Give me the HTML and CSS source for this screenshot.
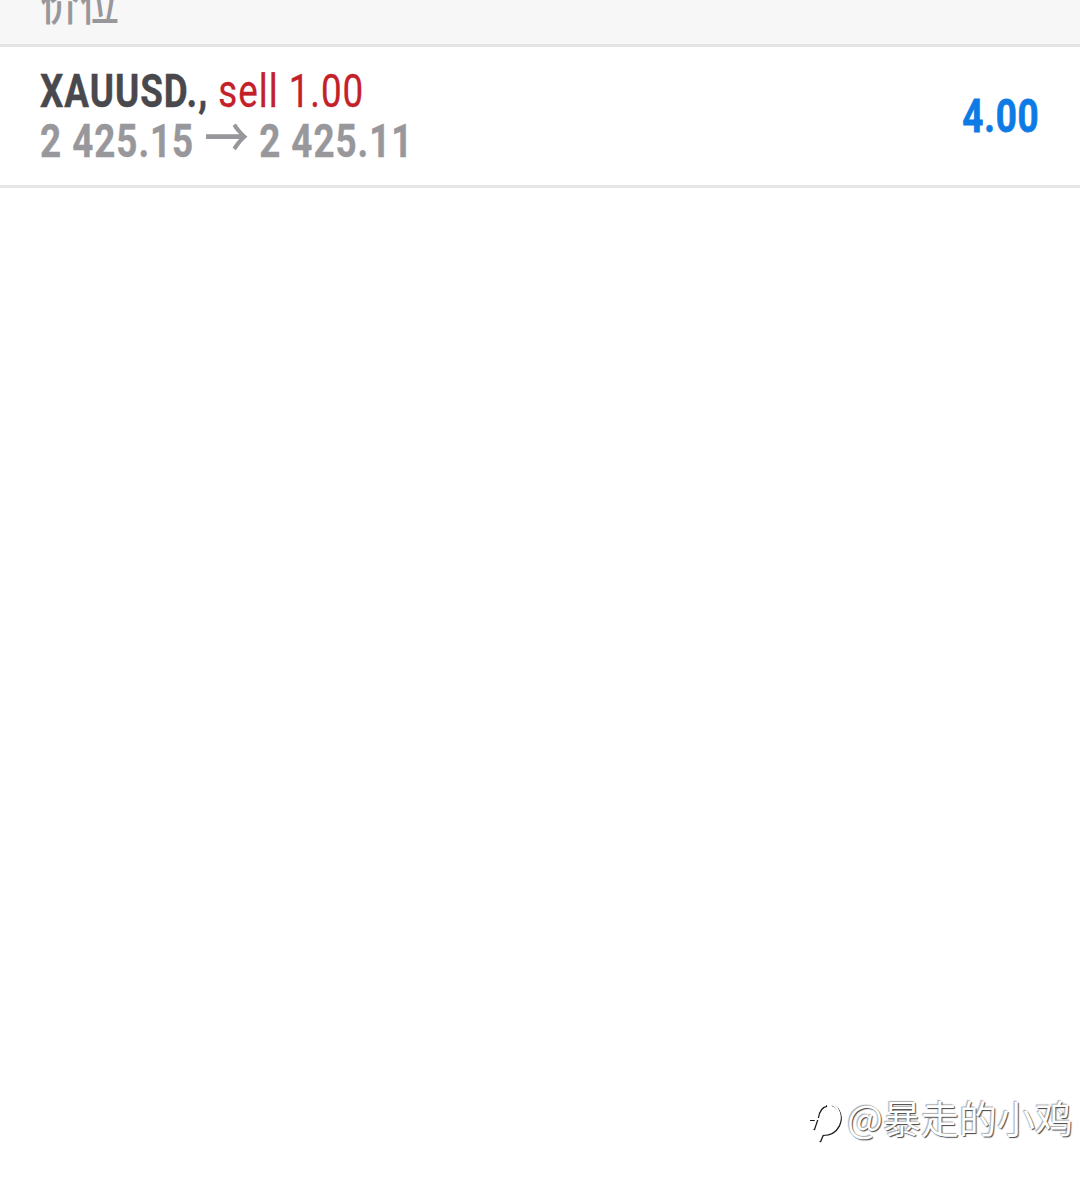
FILE: index.html
```html
<!DOCTYPE html>
<html lang="zh">
<head>
<meta charset="utf-8">
<title>价位</title>
<link rel="stylesheet" href="styles.css">
</head>
<body>
<div class="page">
  <header class="head"><span class="head-text">价位</span></header>
  <div class="row">
    <div class="info">
      <div class="line1"><b class="sym">XAUUSD.,</b> <span class="side">sell 1.00</span></div>
      <div class="line2">2 425.15 <span class="arrow">→</span> 2 425.11</div>
    </div>
    <div class="profit">4.00</div>
  </div>
  <div class="mark">
    <svg class="mark-icon" viewBox="0 0 34 44" width="34" height="44" aria-hidden="true">
      <path class="s-dark" d="M22 5C30 8 33 18 29 26C26 32 20 35 13 35L10 42"/>
      <path class="s-dark" d="M17 6C11 7 9 12 8 18L4 30"/>
      <path class="s-dark" d="M0 20H6M14 19H17"/>
      <path class="s-light" d="M21 4C29 7 32 17 28 25C25 31 19 34 12 34L9 41"/>
      <path class="s-light" d="M16 5C10 6 8 11 7 17L3 29M0 19H17"/>
    </svg>
    <span class="mark-text">@暴走的小鸡</span>
  </div>
</div>
</body>
</html>
```
FILE: styles.css
```css
* { box-sizing: border-box; }
html, body { margin: 0; background: #fff; }
.page { position: relative; width: 1080px; height: 1179px; overflow: hidden; background: #fff; font-family: Roboto, "Noto Sans CJK SC", sans-serif; }
.head { height: 47px; background: #f7f7f7; border-bottom: 3px solid #e4e4e4; padding-left: 40px; overflow: hidden; }
.head-text { display: block; margin-top: -24px; font-size: 44px; line-height: 60px; font-weight: 500; color: #98989c; transform: scaleX(0.9); transform-origin: left; }
.row { height: 141px; display: flex; justify-content: space-between; align-items: center; padding: 0 40px; border-bottom: 3px solid #e6e6e6; background: #fff; }
.info { display: flex; flex-direction: column; }
.line1, .line2 { font-size: 46px; line-height: 50px; letter-spacing: 1.2px; white-space: nowrap; transform: scaleX(0.8); transform-origin: left; }
.sym { font-weight: 700; color: #48484d; -webkit-text-stroke: 0.4px #48484d; }
.side { color: #c4202a; -webkit-text-stroke: 0.3px #c4202a; }
.line2 { font-weight: 700; color: #98989c; -webkit-text-stroke: 0.4px #98989c; }
.arrow { font-family: "Noto Sans CJK SC", sans-serif; font-size: 56px; font-weight: 500; line-height: 0; letter-spacing: 0; vertical-align: -1px; -webkit-text-stroke: 0; }
.profit { font-size: 46px; line-height: 50px; letter-spacing: 1px; font-weight: 700; color: #0d7be6; -webkit-text-stroke: 0.8px #0d7be6; transform: scaleX(0.8); transform-origin: right; }
.mark { position: absolute; left: 810px; top: 1092px; display: flex; align-items: flex-start; gap: 3px; }
.mark-icon { display: block; margin-top: 8px; fill: none; }
.s-dark { stroke: #1c1c1c; stroke-width: 2; fill: none; }
.s-light { stroke: #fff; stroke-width: 2; fill: none; }
.mark-text { font-family: "Noto Sans CJK SC", sans-serif; font-size: 38px; line-height: 50px; color: #fff; text-shadow: 1px 1px 1px #444, -1px -1px 1px #aaa; white-space: nowrap; }
```
